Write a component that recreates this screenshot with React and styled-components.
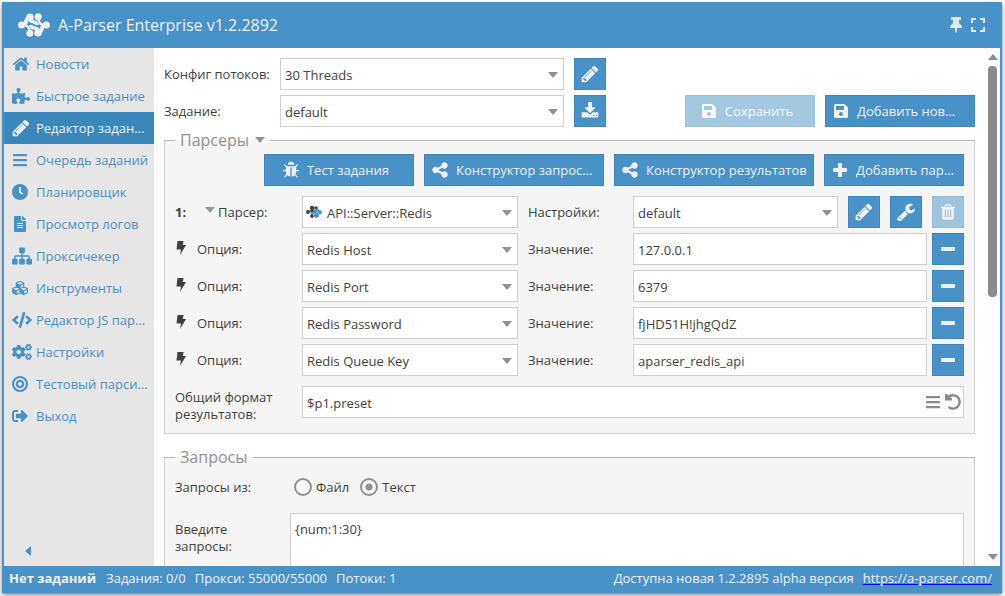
import React, { useState } from 'react';
import styled, { createGlobalStyle } from 'styled-components';
import {
    FaPuzzlePiece,
    FaBars,
    FaFileAlt,
    FaCubes,
    FaCode,
    FaCogs,
    FaSignOutAlt,
    FaSave,
    FaThumbtack,
} from 'react-icons/fa';

// icons
const Glyph = ({ d, size = 18, box = '0 0 1792 1792' }) => (
    <svg width={size} height={size} viewBox={box} fill="currentColor" aria-hidden="true">
        <path d={d} />
    </svg>
);

const paths = {
    home: 'M1472 992v480q0 26-19 45t-45 19h-384v-384h-256v384h-384q-26 0-45-19t-19-45v-480q0-1 .5-3t.5-3l575-474 575 474q1 2 1 6zm223-69l-62 74q-8 9-21 11h-3q-13 0-21-7l-692-577-692 577q-12 8-24 7-13-2-21-11l-62-74q-8-10-7-23.5t11-21.5l719-599q32-26 76-26t76 26l244 204v-195q0-14 9-23t23-9h192q14 0 23 9t9 23v408l219 182q10 8 11 21.5t-7 23.5z',
    pencil: 'M491 1536l91-91-235-235-91 91v107h128v128h107zm523-928q0-22-22-22-10 0-17 7l-542 542q-7 7-7 17 0 22 22 22 10 0 17-7l542-542q7-7 7-17zm-54-192l416 416-832 832h-416v-416zm683 96q0 53-37 90l-166 166-416-416 166-165q36-38 90-38 53 0 91 38l235 234q37 39 37 91z',
    sitemap: 'M1792 1248v320q0 40-28 68t-68 28h-320q-40 0-68-28t-28-68v-320q0-40 28-68t68-28h96v-192h-512v192h96q40 0 68 28t28 68v320q0 40-28 68t-68 28h-320q-40 0-68-28t-28-68v-320q0-40 28-68t68-28h96v-192h-512v192h96q40 0 68 28t28 68v320q0 40-28 68t-68 28h-320q-40 0-68-28t-28-68v-320q0-40 28-68t68-28h96v-192q0-52 38-90t90-38h512v-192h-96q-40 0-68-28t-28-68v-320q0-40 28-68t68-28h320q40 0 68 28t28 68v320q0 40-28 68t-68 28h-96v192h512q52 0 90 38t38 90v192h96q40 0 68 28t28 68z',
    trash: 'M704 1376v-704q0-14-9-23t-23-9h-64q-14 0-23 9t-9 23v704q0 14 9 23t23 9h64q14 0 23-9t9-23zm256 0v-704q0-14-9-23t-23-9h-64q-14 0-23 9t-9 23v704q0 14 9 23t23 9h64q14 0 23-9t9-23zm256 0v-704q0-14-9-23t-23-9h-64q-14 0-23 9t-9 23v704q0 14 9 23t23 9h64q14 0 23-9t9-23zm-544-992h448l-48-117q-7-9-17-11h-317q-10 2-17 11zm928 32v64q0 14-9 23t-23 9h-96v948q0 83-47 143.5t-113 60.5h-832q-66 0-113-58.5t-47-141.5v-952h-96q-14 0-23-9t-9-23v-64q0-14 9-23t23-9h309l70-167q15-37 54-63t79-26h320q40 0 79 26t54 63l70 167h309q14 0 23 9t9 23z',
    wrench: 'M448 1472q0-26-19-45t-45-19-45 19-19 45 19 45 45 19 45-19 19-45zm644-420l-682 682q-37 37-90 37-52 0-91-37l-106-108q-38-36-38-90 0-53 38-91l681-681q39 98 114.5 173.5t173.5 114.5zm634-435q0 39-23 106-47 134-164.5 217.5t-258.5 83.5q-185 0-316.5-131.5t-131.5-316.5 131.5-316.5 316.5-131.5q58 0 121.5 16.5t107.5 46.5q16 11 16 28t-16 28l-293 169v224l193 107q5-3 79-48.5t135.5-81 70.5-35.5q15 0 23.5 10t8.5 25z',
    share: 'M1344 1024q133 0 226.5 93.5t93.5 226.5-93.5 226.5-226.5 93.5-226.5-93.5-93.5-226.5q0-12 2-34l-360-180q-92 86-218 86-133 0-226.5-93.5t-93.5-226.5 93.5-226.5 226.5-93.5q126 0 218 86l360-180q-2-22-2-34 0-133 93.5-226.5t226.5-93.5 226.5 93.5 93.5 226.5-93.5 226.5-226.5 93.5q-126 0-218-86l-360 180q2 22 2 34t-2 34l360 180q92-86 218-86z',
    bug: 'M1696 960q0 26-19 45t-45 19h-224q0 171-67 290l208 209q19 19 19 45t-19 45q-18 19-45 19t-45-19l-198-197q-5 5-15 13t-42 28.5-65 36.5-82 29-97 13v-896h-128v896q-51 0-101.5-13.5t-87-33-66-39-43.5-32.5l-15-14-183 207q-20 21-48 21-24 0-43-16-19-18-20.5-44.5t15.5-46.5l202-227q-58-114-58-274h-224q-26 0-45-19t-19-45 19-45 45-19h224v-294l-173-173q-19-19-19-45t19-45 45-19 45 19l173 173h844l173-173q19-19 45-19t45 19 19 45-19 45l-173 173v294h224q26 0 45 19t19 45zm-480-576h-640q0-133 93.5-226.5t226.5-93.5 226.5 93.5 93.5 226.5z',
    download: 'M1344 1344q0-26-19-45t-45-19-45 19-19 45 19 45 45 19 45-19 19-45zm256 0q0-26-19-45t-45-19-45 19-19 45 19 45 45 19 45-19 19-45zm128-224v320q0 40-28 68t-68 28h-1472q-40 0-68-28t-28-68v-320q0-40 28-68t68-28h465l135 136q58 56 136 56t136-56l136-136h464q40 0 68 28t28 68zm-325-569q17 41-14 70l-448 448q-18 19-45 19t-45-19l-448-448q-31-29-14-70 17-39 59-39h256v-448q0-26 19-45t45-19h256q26 0 45 19t19 45v448h256q42 0 59 39z',
};

const PencilIcon = () => <Glyph d={paths.pencil} box="64 64 1664 1664" />;

const ClockIcon = () => (
    <svg width="16" height="16" viewBox="0 0 16 16" aria-hidden="true">
        <circle cx="8" cy="8" r="8" fill="currentColor" />
        <path d="M8 3v5.2l2.6 1.8" fill="none" stroke="#e6e6e6" strokeWidth="2" />
    </svg>
);

const TargetIcon = () => (
    <svg width="16" height="16" viewBox="0 0 16 16" fill="none" stroke="currentColor" aria-hidden="true">
        <circle cx="8" cy="8" r="7" strokeWidth="2" />
        <circle cx="8" cy="8" r="3.2" strokeWidth="2.2" />
    </svg>
);

const PlusIcon = () => (
    <svg width="18" height="18" viewBox="0 0 18 18" fill="currentColor" aria-hidden="true">
        <rect x="2" y="7" width="14" height="4" rx="1" />
        <rect x="7" y="2" width="4" height="14" rx="1" />
    </svg>
);

const MinusIcon = () => (
    <svg width="16" height="16" viewBox="0 0 16 16" fill="currentColor" aria-hidden="true">
        <rect x="1" y="6" width="14" height="4" rx="1" />
    </svg>
);

const BoltIcon = () => (
    <svg width="12" height="16" viewBox="0 0 12 16" fill="currentColor" aria-hidden="true">
        <path d="M2.500 0H8.600L7.800 4H11L5 14L6 8.500H1.500z" />
    </svg>
);

const Caret = () => (
    <svg width="10" height="6" viewBox="0 0 10 6" fill="currentColor" aria-hidden="true">
        <path d="M0 0h10L5 6z" />
    </svg>
);

const FullscreenIcon = () => (
    <svg width="16" height="16" viewBox="0 0 16 16" fill="none" stroke="currentColor" strokeWidth="2" aria-hidden="true">
        <path d="M2 6V2h4M10 2h4v4M14 10v4h-4M6 14H2v-4" />
    </svg>
);

const UndoIcon = () => (
    <svg width="18" height="18" viewBox="0 0 18 18" aria-hidden="true">
        <path d="M3.500 5A6.700 6.700 0 1 1 4.600 14" fill="none" stroke="currentColor" strokeWidth="2.400" />
        <path d="M1 1h2l1.500 2.500L8 5v2.500H1z" fill="currentColor" />
    </svg>
);

const Logo = () => (
    <svg width="32" height="24" viewBox="0 0 32 24" fill="#f0f0f0" aria-hidden="true">
        <g fill="none" stroke="#f0f0f0" strokeWidth="4">
            <path d="M4 12C10 13 6 5 12 4" />
            <path d="M11.500 5C12 12 19 6 19.500 12" strokeWidth="3.500" />
            <path d="M28 12C22 11 26 19 20 20" />
            <path d="M20.500 19C20 12 13 18 12.500 12" strokeWidth="3.500" />
            <path d="M20 4C21 10 22 12 28 12" strokeWidth="2" />
            <path d="M4 12C10 12 11 14 12 20" strokeWidth="2" />
        </g>
        <circle cx="3.600" cy="12" r="3.500" />
        <circle cx="12" cy="4.200" r="3.800" />
        <circle cx="20.200" cy="3.800" r="3.500" />
        <circle cx="28.400" cy="12" r="3.500" />
        <circle cx="11.800" cy="20.200" r="3.500" />
        <circle cx="20" cy="19.800" r="3.800" />
    </svg>
);

const RedisIcon = () => (
    <svg width="16" height="12" viewBox="0 0 16 12" aria-hidden="true">
        <g fill="#3f4347">
            <circle cx="2" cy="6" r="2" />
            <circle cx="6" cy="2" r="2.200" />
            <circle cx="10" cy="2" r="1.800" />
            <circle cx="6" cy="10" r="1.900" />
            <path d="M3 5l4-2 2 2-3 2z" />
        </g>
        <g fill="#4892c7">
            <circle cx="9" cy="5.500" r="2" />
            <circle cx="6.500" cy="7.200" r="1.300" />
            <circle cx="12" cy="4.500" r="1.500" />
            <circle cx="14" cy="6.200" r="2" />
            <circle cx="10.500" cy="9.300" r="2.500" />
        </g>
    </svg>
);

// data
const menu = [
    { text: 'Новости', icon: <Glyph d={paths.home} /> },
    { text: 'Быстрое задание', icon: <FaPuzzlePiece size={18} /> },
    { text: 'Редактор заданий', icon: <PencilIcon />, active: true },
    { text: 'Очередь заданий', icon: <FaBars size={16} /> },
    { text: 'Планировщик', icon: <ClockIcon /> },
    { text: 'Просмотр логов', icon: <FaFileAlt size={16} /> },
    { text: 'Проксичекер', icon: <Glyph d={paths.sitemap} size={20} /> },
    { text: 'Инструменты', icon: <FaCubes size={16} /> },
    { text: 'Редактор JS парсеров', icon: <FaCode size={20} /> },
    { text: 'Настройки', icon: <FaCogs size={20} /> },
    { text: 'Тестовый парсинг', icon: <TargetIcon /> },
    { text: 'Выход', icon: <FaSignOutAlt size={16} /> },
];

const options = [
    { name: 'Redis Host', value: '127.0.0.1' },
    { name: 'Redis Port', value: '6379' },
    { name: 'Redis Password', value: 'fjHD51H!jhgQdZ' },
    { name: 'Redis Queue Key', value: 'aparser_redis_api' },
];

const Combo = ({ id, value, icon }) => (
    <ComboBox>
        {icon && <ComboIcon>{icon}</ComboIcon>}
        <Select id={id} defaultValue={value} $hasIcon={Boolean(icon)}>
            <option>{value}</option>
        </Select>
        <ComboArrow><Caret /></ComboArrow>
    </ComboBox>
);

const App = () => {
    const [source, setSource] = useState('text');

    return (
        <>
            <GlobalStyle />
            <Window>
                <Header>
                    <Logo />
                    <Title>A-Parser Enterprise v1.2.2892</Title>
                    <HeaderButton aria-label="Закрепить"><FaThumbtack size={16} /></HeaderButton>
                    <HeaderButton aria-label="Во весь экран"><FullscreenIcon /></HeaderButton>
                </Header>

                <Body>
                    <Sidebar>
                        {menu.map((item) => (
                            <MenuItem key={item.text} href="#" $active={item.active}>
                                <MenuIcon>{item.icon}</MenuIcon>
                                <MenuText>{item.text}</MenuText>
                            </MenuItem>
                        ))}
                        <Collapse aria-label="Свернуть">
                            <svg width="6" height="10" viewBox="0 0 6 10" fill="currentColor">
                                <path d="M6 0v10L0 5z" />
                            </svg>
                        </Collapse>
                    </Sidebar>

                    <Content>
                        <TopRow>
                            <TopLabel htmlFor="threads">Конфиг потоков:</TopLabel>
                            <TopField><Combo id="threads" value="30 Threads" /></TopField>
                            <Button aria-label="Изменить"><PencilIcon /></Button>
                        </TopRow>
                        <TopRow>
                            <TopLabel htmlFor="task">Задание:</TopLabel>
                            <TopField><Combo id="task" value="default" /></TopField>
                            <Button aria-label="Загрузить"><Glyph d={paths.download} /></Button>
                            <TopActions>
                                <TextButton $width={130} disabled>
                                    <FaSave size={16} /><ButtonText>Сохранить</ButtonText>
                                </TextButton>
                                <TextButton $width={150} $end={14}>
                                    <FaSave size={16} /><ButtonText>Добавить новое задание</ButtonText>
                                </TextButton>
                            </TopActions>
                        </TopRow>

                        <Fieldset>
                            <Legend>Парсеры <Caret /></Legend>
                            <Toolbar>
                                <TextButton $width={150}>
                                    <Glyph d={paths.bug} /><ButtonText>Тест задания</ButtonText>
                                </TextButton>
                                <TextButton $width={180} $end={8}>
                                    <Glyph d={paths.share} /><ButtonText>Конструктор запросов</ButtonText>
                                </TextButton>
                                <TextButton $width={200} $end={2}>
                                    <Glyph d={paths.share} /><ButtonText>Конструктор результатов</ButtonText>
                                </TextButton>
                                <TextButton $width={140}>
                                    <PlusIcon /><ButtonText>Добавить парсер</ButtonText>
                                </TextButton>
                            </Toolbar>

                            <Row>
                                <RowLabel>
                                    <Number>1:</Number>
                                    <SmallCaret><Caret /></SmallCaret>
                                    <label htmlFor="parser">Парсер:</label>
                                </RowLabel>
                                <OptionField>
                                    <Combo id="parser" value="API::Server::Redis" icon={<RedisIcon />} />
                                </OptionField>
                                <ValueLabel htmlFor="preset">Настройки:</ValueLabel>
                                <Fill><Combo id="preset" value="default" /></Fill>
                                <ButtonGroup>
                                    <Button aria-label="Изменить"><PencilIcon /></Button>
                                    <Button aria-label="Параметры">
                                        <Glyph d={paths.wrench} box="64 64 1664 1664" />
                                    </Button>
                                    <Button aria-label="Удалить" disabled><Glyph d={paths.trash} /></Button>
                                </ButtonGroup>
                            </Row>

                            {options.map((opt, index) => (
                                <Row key={opt.name}>
                                    <RowLabel>
                                        <Bolt><BoltIcon /></Bolt>
                                        <label htmlFor={`option${index}`}>Опция:</label>
                                    </RowLabel>
                                    <OptionField><Combo id={`option${index}`} value={opt.name} /></OptionField>
                                    <ValueLabel htmlFor={`value${index}`}>Значение:</ValueLabel>
                                    <Input id={`value${index}`} defaultValue={opt.value} />
                                    <RemoveButton aria-label="Удалить опцию"><MinusIcon /></RemoveButton>
                                </Row>
                            ))}

                            <FormatRow>
                                <FormatLabel htmlFor="format">Общий формат результатов:</FormatLabel>
                                <FormatBox>
                                    <FormatInput id="format" defaultValue="$p1.preset" />
                                    <IconButton aria-label="Список"><FaBars size={16} /></IconButton>
                                    <IconButton aria-label="Сбросить"><UndoIcon /></IconButton>
                                </FormatBox>
                            </FormatRow>
                        </Fieldset>

                        <Fieldset>
                            <Legend>Запросы</Legend>
                            <RadioRow>
                                <QueryLabel as="span">Запросы из:</QueryLabel>
                                <RadioLabel>
                                    <Radio name="source" checked={source === 'file'} onChange={() => setSource('file')} />
                                    Файл
                                </RadioLabel>
                                <RadioLabel>
                                    <Radio name="source" checked={source === 'text'} onChange={() => setSource('text')} />
                                    Текст
                                </RadioLabel>
                            </RadioRow>
                            <QueryRow>
                                <QueryLabel htmlFor="queries">Введите запросы:</QueryLabel>
                                <TextArea id="queries" defaultValue="{num:1:30}" />
                            </QueryRow>
                        </Fieldset>
                    </Content>

                    <Scrollbar aria-hidden="true">
                        <ScrollArrow $up><Caret /></ScrollArrow>
                        <ScrollTrack><ScrollThumb /></ScrollTrack>
                        <ScrollArrow><Caret /></ScrollArrow>
                    </Scrollbar>
                </Body>

                <Footer>
                    <Status>Нет заданий</Status>
                    <span>Задания: 0/0</span>
                    <span>Прокси: 55000/55000</span>
                    <span>Потоки: 1</span>
                    <Update>Доступна новая 1.2.2895 alpha версия</Update>
                    <SiteLink href="https://a-parser.com/">https://a-parser.com/</SiteLink>
                </Footer>
            </Window>
        </>
    );
};

export default App;

// Styled components
const GlobalStyle = createGlobalStyle`
    * {
        box-sizing: border-box;
    }
    body {
        margin: 0;
        background: #fff;
        overflow: hidden;
    }
    body, button, input, select, textarea {
        font-family: 'Open Sans', 'Noto Sans', sans-serif;
        font-size: 13px;
        line-height: 17px;
        color: #404040;
    }
    svg {
        flex-shrink: 0;
    }
`;

const Window = styled.div`
    display: flex;
    flex-direction: column;
    height: calc(100vh - 5px);
    margin: 2px 3px 3px 2px;
    background: #4892c7;
    box-shadow: 0 2px 4px rgba(0, 0, 0, 0.5);
`;

// header
const Header = styled.header`
    display: flex;
    align-items: center;
    height: 46px;
    padding: 0 16px;
    color: #f0f0f0;
`;

const Title = styled.h1`
    flex: 1;
    margin: 0;
    padding-left: 8px;
    font-size: 16px;
    line-height: 22px;
    font-weight: 400;
`;

const HeaderButton = styled.button`
    display: flex;
    margin-left: 6px;
    padding: 0;
    border: 0;
    background: none;
    color: #dae9f4;
`;

const Body = styled.div`
    display: flex;
    flex: 1;
    min-height: 0;
    padding: 0 2px;
`;

// sidebar
const Sidebar = styled.nav`
    display: flex;
    flex-direction: column;
    flex: 0 0 150px;
    min-width: 0;
    background: #e6e6e6;
`;

const MenuItem = styled.a`
    display: flex;
    align-items: center;
    height: 32px;
    padding: 0 5px 0 8px;
    text-decoration: none;
    color: ${({ $active }) => ($active ? '#f0f0f0' : '#4892c7')};
    background: ${({ $active }) => ($active ? '#3a87bc' : 'transparent')};
`;

const MenuIcon = styled.span`
    display: flex;
    flex: 0 0 24px;
`;

const MenuText = styled.span`
    flex: 1;
    min-width: 0;
    overflow: hidden;
    white-space: nowrap;
    text-overflow: ellipsis;
`;

const Collapse = styled.button`
    display: flex;
    align-self: flex-start;
    margin: auto 0 10px 21px;
    padding: 0;
    border: 0;
    background: none;
    color: #4892c7;
`;

// content
const Content = styled.main`
    flex: 1;
    min-width: 0;
    padding: 10px;
    background: #fff;
    overflow: hidden;
`;

const TopRow = styled.div`
    display: flex;
    margin-bottom: 5px;
`;

const TopLabel = styled.label`
    flex: 0 0 116px;
    padding-top: 8px;
`;

const TopField = styled.div`
    flex: 0 1 284px;
    margin-right: 10px;
`;

const TopActions = styled.div`
    display: flex;
    gap: 10px;
    margin-left: auto;
`;

const Button = styled.button`
    display: flex;
    align-items: center;
    justify-content: center;
    flex-shrink: 0;
    width: 32px;
    height: 32px;
    padding: 0;
    border: 1px solid #3d85bb;
    background: #4892c7;
    color: #f0f0f0;

    &:disabled {
        opacity: 0.5;
    }
`;

const RemoveButton = styled(Button)`
    margin-left: 5px;
`;

const TextButton = styled(Button)`
    width: ${({ $width }) => $width}px;
    padding: 0 ${({ $end = 5 }) => $end}px 0 6px;

    svg {
        min-width: 18px;
    }

    /* spare room after the caption, gives way first when the text is long */
    &::after {
        content: '';
        flex: 0 1000000 8px;
    }
`;

const ButtonText = styled.span`
    min-width: 0;
    margin-left: 7px;
    overflow: hidden;
    white-space: nowrap;
    text-overflow: ellipsis;
`;

const Fieldset = styled.fieldset`
    min-width: 0;
    margin: 0 0 15px;
    padding: 0 10px 15px;
    border: 1px solid #cfcfcf;
    border-top-color: #b8b8b8;
    background: #f5f5f5;
`;

const Legend = styled.legend`
    display: flex;
    align-items: center;
    gap: 6px;
    padding: 0 5px;
    font-size: 16px;
    line-height: 16px;
    color: #919191;
`;

const Toolbar = styled.div`
    display: flex;
    justify-content: flex-end;
    gap: 10px;
    margin: 6px 0 10px;
`;

const Row = styled.div`
    display: flex;
    margin-bottom: 5px;
`;

const RowLabel = styled.div`
    display: flex;
    flex: 0 0 127px;
    padding-top: 8px;
`;

const Number = styled.b`
    width: 30px;
`;

const SmallCaret = styled.span`
    display: flex;
    align-items: flex-start;
    padding: 3px 3px 0 0;
    color: #9a9a9a;
`;

const Bolt = styled.span`
    display: flex;
    width: 22px;
`;

const OptionField = styled.div`
    flex: 0 1 216px;
    margin-right: 10px;
`;

const ValueLabel = styled.label`
    flex: 0 0 105px;
    padding-top: 8px;
`;

const Fill = styled.div`
    flex: 1;
`;

const ButtonGroup = styled.div`
    display: flex;
    gap: 10px;
    margin-left: 10px;
`;

const ComboBox = styled.div`
    display: grid;
    align-items: center;
    height: 32px;
    border: 1px solid #cfcfcf;
    background: #fff;
`;

const ComboIcon = styled.span`
    grid-area: 1 / 1;
    display: flex;
    padding-left: 3px;
    pointer-events: none;
    z-index: 1;
`;

const Select = styled.select`
    grid-area: 1 / 1;
    width: 100%;
    height: 30px;
    padding: 2px 20px 0 ${({ $hasIcon }) => ($hasIcon ? 24 : 4)}px;
    border: 0;
    background: none;
    appearance: none;
    outline: none;
`;

const ComboArrow = styled.span`
    grid-area: 1 / 1;
    display: flex;
    justify-self: end;
    padding: 2px 5px 0 0;
    color: #919191;
    pointer-events: none;
`;

const Input = styled.input`
    flex: 1;
    min-width: 0;
    height: 32px;
    padding: 2px 4px 0;
    border: 1px solid #cfcfcf;
    background: #fff;
    outline: none;
`;

const FormatRow = styled.div`
    display: flex;
    height: 32px;
    margin-top: 10px;
`;

const FormatLabel = styled.label`
    flex: 0 0 127px;
    padding: 3px 20px 0 0;
`;

const FormatBox = styled.div`
    display: flex;
    align-items: center;
    flex: 1;
    height: 32px;
    padding-right: 1px;
    border: 1px solid #cfcfcf;
    background: #fff;
`;

const FormatInput = styled(Input)`
    height: 30px;
    border: 0;
`;

const IconButton = styled.button`
    display: flex;
    margin-left: 3px;
    padding: 0;
    border: 0;
    background: none;
    color: #8a8a8a;
`;

// queries
const RadioRow = styled.div`
    display: flex;
    align-items: center;
    height: 32px;
    margin: 6px 0 10px;
`;

const QueryLabel = styled.label`
    flex: 0 0 115px;
    padding-right: 20px;
`;

const RadioLabel = styled.label`
    display: flex;
    align-items: center;
    gap: 4px;
    margin: 0 7px 0 4px;
`;

const Radio = styled.input.attrs({ type: 'radio' })`
    width: 18px;
    height: 18px;
    margin: 0;
    border: 2px solid #919191;
    border-radius: 50%;
    background: #f8f8f8;
    appearance: none;

    &:checked {
        background: radial-gradient(circle, #919191 3px, #f8f8f8 4px);
    }
`;

const QueryRow = styled.div`
    display: flex;

    ${QueryLabel} {
        padding-top: 8px;
    }
`;

const TextArea = styled.textarea`
    flex: 1;
    height: 150px;
    padding: 7px 4px;
    border: 1px solid #cfcfcf;
    background: #fff;
    outline: none;
    resize: none;
`;

// scrollbar
const Scrollbar = styled.div`
    display: flex;
    flex-direction: column;
    flex: 0 0 15px;
    align-items: center;
    background: #fcfcfc;
    color: #8b8b8b;
`;

const ScrollArrow = styled.span`
    display: flex;
    align-items: center;
    height: 18px;
    transform: ${({ $up }) => ($up ? 'rotate(180deg)' : 'none')};
`;

const ScrollTrack = styled.div`
    flex: 1;
    width: 9px;
`;

const ScrollThumb = styled.div`
    height: 48%;
    border-radius: 4px;
    background: #8b8b8b;
`;

// footer
const Footer = styled.footer`
    display: flex;
    align-items: center;
    gap: 9px;
    height: 27px;
    padding: 0 10px 2px 7px;
    white-space: nowrap;
    color: #f0f0f0;
`;

const Status = styled.b`
    padding-right: 1px;
`;

const Update = styled.span`
    margin-left: auto;
`;

const SiteLink = styled.a`
    color: #f0f0f0;
    text-decoration-color: #0000ee;
`;
